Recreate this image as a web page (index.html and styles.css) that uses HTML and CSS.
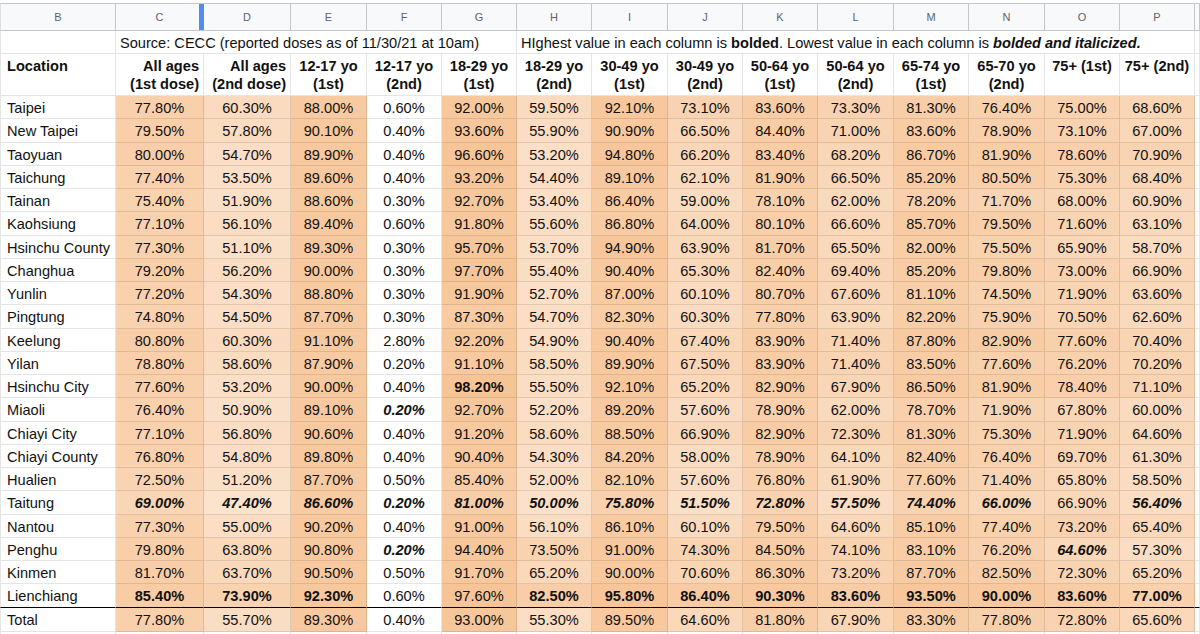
FILE: index.html
```html
<!DOCTYPE html>
<html>
<head>
<meta charset="utf-8">
<link rel="stylesheet" href="styles.css">
</head>
<body>
<table class="sheet">
<colgroup>
<col class="cb"><col class="cc"><col class="cd"><col class="c76"><col class="c75"><col class="c75"><col class="c75"><col class="c76"><col class="c75"><col class="c75"><col class="c76"><col class="c75"><col class="c76"><col class="c75"><col class="c75"><col class="cx">
</colgroup>
<tbody>
<tr class="letters"><td>B</td><td class="sel">C<span class="handle"></span></td><td>D</td><td>E</td><td>F</td><td>G</td><td>H</td><td>I</td><td>J</td><td>K</td><td>L</td><td>M</td><td>N</td><td>O</td><td>P</td><td></td></tr>
<tr class="src"><td></td><td colspan="5">Source: CECC (reported doses as of 11/30/21 at 10am)</td><td colspan="9">HIghest value in each column is <b>bolded</b>. Lowest value in each column is <b><i>bolded and italicized.</i></b></td><td></td></tr>
<tr class="labels"><td class="loc">Location</td><td class="r">All ages<br>(1st dose)</td><td class="r">All ages<br>(2nd dose)</td><td>12-17 yo<br>(1st)</td><td>12-17 yo<br>(2nd)</td><td>18-29 yo<br>(1st)</td><td>18-29 yo<br>(2nd)</td><td>30-49 yo<br>(1st)</td><td>30-49 yo<br>(2nd)</td><td>50-64 yo<br>(1st)</td><td>50-64 yo<br>(2nd)</td><td>65-74 yo<br>(1st)</td><td>65-70 yo<br>(2nd)</td><td>75+ (1st)</td><td>75+ (2nd)</td><td></td></tr>
<tr class="d"><td>Taipei</td><td>77.80%</td><td>60.30%</td><td>88.00%</td><td>0.60%</td><td>92.00%</td><td>59.50%</td><td>92.10%</td><td>73.10%</td><td>83.60%</td><td>73.30%</td><td>81.30%</td><td>76.40%</td><td>75.00%</td><td>68.60%</td><td></td></tr>
<tr class="d"><td>New Taipei</td><td>79.50%</td><td>57.80%</td><td>90.10%</td><td>0.40%</td><td>93.60%</td><td>55.90%</td><td>90.90%</td><td>66.50%</td><td>84.40%</td><td>71.00%</td><td>83.60%</td><td>78.90%</td><td>73.10%</td><td>67.00%</td><td></td></tr>
<tr class="d"><td>Taoyuan</td><td>80.00%</td><td>54.70%</td><td>89.90%</td><td>0.40%</td><td>96.60%</td><td>53.20%</td><td>94.80%</td><td>66.20%</td><td>83.40%</td><td>68.20%</td><td>86.70%</td><td>81.90%</td><td>78.60%</td><td>70.90%</td><td></td></tr>
<tr class="d"><td>Taichung</td><td>77.40%</td><td>53.50%</td><td>89.60%</td><td>0.40%</td><td>93.20%</td><td>54.40%</td><td>89.10%</td><td>62.10%</td><td>81.90%</td><td>66.50%</td><td>85.20%</td><td>80.50%</td><td>75.30%</td><td>68.40%</td><td></td></tr>
<tr class="d"><td>Tainan</td><td>75.40%</td><td>51.90%</td><td>88.60%</td><td>0.30%</td><td>92.70%</td><td>53.40%</td><td>86.40%</td><td>59.00%</td><td>78.10%</td><td>62.00%</td><td>78.20%</td><td>71.70%</td><td>68.00%</td><td>60.90%</td><td></td></tr>
<tr class="d"><td>Kaohsiung</td><td>77.10%</td><td>56.10%</td><td>89.40%</td><td>0.60%</td><td>91.80%</td><td>55.60%</td><td>86.80%</td><td>64.00%</td><td>80.10%</td><td>66.60%</td><td>85.70%</td><td>79.50%</td><td>71.60%</td><td>63.10%</td><td></td></tr>
<tr class="d"><td>Hsinchu County</td><td>77.30%</td><td>51.10%</td><td>89.30%</td><td>0.30%</td><td>95.70%</td><td>53.70%</td><td>94.90%</td><td>63.90%</td><td>81.70%</td><td>65.50%</td><td>82.00%</td><td>75.50%</td><td>65.90%</td><td>58.70%</td><td></td></tr>
<tr class="d"><td>Changhua</td><td>79.20%</td><td>56.20%</td><td>90.00%</td><td>0.30%</td><td>97.70%</td><td>55.40%</td><td>90.40%</td><td>65.30%</td><td>82.40%</td><td>69.40%</td><td>85.20%</td><td>79.80%</td><td>73.00%</td><td>66.90%</td><td></td></tr>
<tr class="d"><td>Yunlin</td><td>77.20%</td><td>54.30%</td><td>88.80%</td><td>0.30%</td><td>91.90%</td><td>52.70%</td><td>87.00%</td><td>60.10%</td><td>80.70%</td><td>67.60%</td><td>81.10%</td><td>74.50%</td><td>71.90%</td><td>63.60%</td><td></td></tr>
<tr class="d"><td>Pingtung</td><td>74.80%</td><td>54.50%</td><td>87.70%</td><td>0.30%</td><td>87.30%</td><td>54.70%</td><td>82.30%</td><td>60.30%</td><td>77.80%</td><td>63.90%</td><td>82.20%</td><td>75.90%</td><td>70.50%</td><td>62.60%</td><td></td></tr>
<tr class="d"><td>Keelung</td><td>80.80%</td><td>60.30%</td><td>91.10%</td><td>2.80%</td><td>92.20%</td><td>54.90%</td><td>90.40%</td><td>67.40%</td><td>83.90%</td><td>71.40%</td><td>87.80%</td><td>82.90%</td><td>77.60%</td><td>70.40%</td><td></td></tr>
<tr class="d"><td>Yilan</td><td>78.80%</td><td>58.60%</td><td>87.90%</td><td>0.20%</td><td>91.10%</td><td>58.50%</td><td>89.90%</td><td>67.50%</td><td>83.90%</td><td>71.40%</td><td>83.50%</td><td>77.60%</td><td>76.20%</td><td>70.20%</td><td></td></tr>
<tr class="d"><td>Hsinchu City</td><td>77.60%</td><td>53.20%</td><td>90.00%</td><td>0.40%</td><td><b>98.20%</b></td><td>55.50%</td><td>92.10%</td><td>65.20%</td><td>82.90%</td><td>67.90%</td><td>86.50%</td><td>81.90%</td><td>78.40%</td><td>71.10%</td><td></td></tr>
<tr class="d"><td>Miaoli</td><td>76.40%</td><td>50.90%</td><td>89.10%</td><td><b><i>0.20%</i></b></td><td>92.70%</td><td>52.20%</td><td>89.20%</td><td>57.60%</td><td>78.90%</td><td>62.00%</td><td>78.70%</td><td>71.90%</td><td>67.80%</td><td>60.00%</td><td></td></tr>
<tr class="d"><td>Chiayi City</td><td>77.10%</td><td>56.80%</td><td>90.60%</td><td>0.40%</td><td>91.20%</td><td>58.60%</td><td>88.50%</td><td>66.90%</td><td>82.90%</td><td>72.30%</td><td>81.30%</td><td>75.30%</td><td>71.90%</td><td>64.60%</td><td></td></tr>
<tr class="d"><td>Chiayi County</td><td>76.80%</td><td>54.80%</td><td>89.80%</td><td>0.40%</td><td>90.40%</td><td>54.30%</td><td>84.20%</td><td>58.00%</td><td>78.90%</td><td>64.10%</td><td>82.40%</td><td>76.40%</td><td>69.70%</td><td>61.30%</td><td></td></tr>
<tr class="d"><td>Hualien</td><td>72.50%</td><td>51.20%</td><td>87.70%</td><td>0.50%</td><td>85.40%</td><td>52.00%</td><td>82.10%</td><td>57.60%</td><td>76.80%</td><td>61.90%</td><td>77.60%</td><td>71.40%</td><td>65.80%</td><td>58.50%</td><td></td></tr>
<tr class="d"><td>Taitung</td><td><b><i>69.00%</i></b></td><td><b><i>47.40%</i></b></td><td><b><i>86.60%</i></b></td><td><b><i>0.20%</i></b></td><td><b><i>81.00%</i></b></td><td><b><i>50.00%</i></b></td><td><b><i>75.80%</i></b></td><td><b><i>51.50%</i></b></td><td><b><i>72.80%</i></b></td><td><b><i>57.50%</i></b></td><td><b><i>74.40%</i></b></td><td><b><i>66.00%</i></b></td><td>66.90%</td><td><b><i>56.40%</i></b></td><td></td></tr>
<tr class="d"><td>Nantou</td><td>77.30%</td><td>55.00%</td><td>90.20%</td><td>0.40%</td><td>91.00%</td><td>56.10%</td><td>86.10%</td><td>60.10%</td><td>79.50%</td><td>64.60%</td><td>85.10%</td><td>77.40%</td><td>73.20%</td><td>65.40%</td><td></td></tr>
<tr class="d"><td>Penghu</td><td>79.80%</td><td>63.80%</td><td>90.80%</td><td><b><i>0.20%</i></b></td><td>94.40%</td><td>73.50%</td><td>91.00%</td><td>74.30%</td><td>84.50%</td><td>74.10%</td><td>83.10%</td><td>76.20%</td><td><b><i>64.60%</i></b></td><td>57.30%</td><td></td></tr>
<tr class="d"><td>Kinmen</td><td>81.70%</td><td>63.70%</td><td>90.50%</td><td>0.50%</td><td>91.70%</td><td>65.20%</td><td>90.00%</td><td>70.60%</td><td>86.30%</td><td>73.20%</td><td>87.70%</td><td>82.50%</td><td>72.30%</td><td>65.20%</td><td></td></tr>
<tr class="d last"><td>Lienchiang</td><td><b>85.40%</b></td><td><b>73.90%</b></td><td><b>92.30%</b></td><td>0.60%</td><td>97.60%</td><td><b>82.50%</b></td><td><b>95.80%</b></td><td><b>86.40%</b></td><td><b>90.30%</b></td><td><b>83.60%</b></td><td><b>93.50%</b></td><td><b>90.00%</b></td><td><b>83.60%</b></td><td><b>77.00%</b></td><td></td></tr>
<tr class="d total"><td>Total</td><td>77.80%</td><td>55.70%</td><td>89.30%</td><td>0.40%</td><td>93.00%</td><td>55.30%</td><td>89.50%</td><td>64.60%</td><td>81.80%</td><td>67.90%</td><td>83.30%</td><td>77.80%</td><td>72.80%</td><td>65.60%</td><td></td></tr>
<tr class="d"><td></td><td></td><td></td><td></td><td></td><td></td><td></td><td></td><td></td><td></td><td></td><td></td><td></td><td></td><td></td><td></td></tr>
</tbody>
</table>
<script src="script.js"></script>
</body>
</html>
```
FILE: styles.css
```css
html, body {
  margin: 0;
  padding: 0;
  background: #ffffff;
  overflow: hidden;
}
body {
  padding-top: 3px;
  font-family: "Liberation Sans", Arial, sans-serif;
  font-size: 14.6px;
  color: #111111;
}
.sheet {
  width: 1200px;
  table-layout: fixed;
  border-collapse: separate;
  border-spacing: 0;
}
.cb { width: 116px; }
.cc { width: 88px; }
.cd { width: 87px; }
.c76 { width: 76px; }
.c75 { width: 75px; }
.cx { width: 5px; }
.sheet td {
  box-sizing: border-box;
  border-right: 1px solid rgba(0, 0, 0, 0.1);
  border-bottom: 1px solid rgba(0, 0, 0, 0.1);
  padding: 0 4px;
  white-space: nowrap;
  overflow: visible;
  text-align: center;
}
.sheet tr > td:first-child {
  border-left: 1px solid rgba(0, 0, 0, 0.1);
}
.letters td {
  height: 28px;
  background: #f8f9fa;
  border-top: 1px solid #c4c7c5;
  border-right-color: #c4c7c5;
  border-bottom-color: #c4c7c5;
  font-size: 11px;
  color: #5f6368;
  position: relative;
}
.letters td:first-child { border-left-color: #c4c7c5; }
.handle {
  position: absolute;
  right: -1px;
  top: 0;
  width: 5px;
  height: 100%;
  background: #4d8ef0;
}
.src td {
  height: 23px;
  text-align: left;
  padding-left: 4px;
  padding-top: 1px;
}
.labels td {
  height: 42px;
  vertical-align: top;
  padding-top: 3px;
  line-height: 18px;
  font-weight: 700;
}
.labels td.loc { text-align: left; padding-left: 6px; }
.labels td.r { text-align: right; padding-right: 4px; }
.d td { height: 23.26px; padding-top: 2px; }
.d td:first-child { text-align: left; padding-left: 6px; }
.last td { border-bottom: 1px solid #000000; }
.total td { height: 24px; }
b { font-weight: 700; }
i { font-style: italic; }
```
FILE: script.js
```js
(function () {
  var rows = document.querySelectorAll('tr.d');
  var lo = 0.2, hi = 98.2;
  var top = [247, 196, 150];
  rows.forEach(function (tr) {
    var cells = tr.children;
    for (var i = 1; i < cells.length - 1; i++) {
      var t = cells[i].textContent.trim();
      if (!t) continue;
      var v = parseFloat(t);
      var f = Math.max(0, Math.min(1, (v - lo) / (hi - lo)));
      var c = top.map(function (x) { return Math.round(255 - f * (255 - x)); });
      cells[i].style.backgroundColor = 'rgb(' + c.join(',') + ')';
    }
  });
})();
```
